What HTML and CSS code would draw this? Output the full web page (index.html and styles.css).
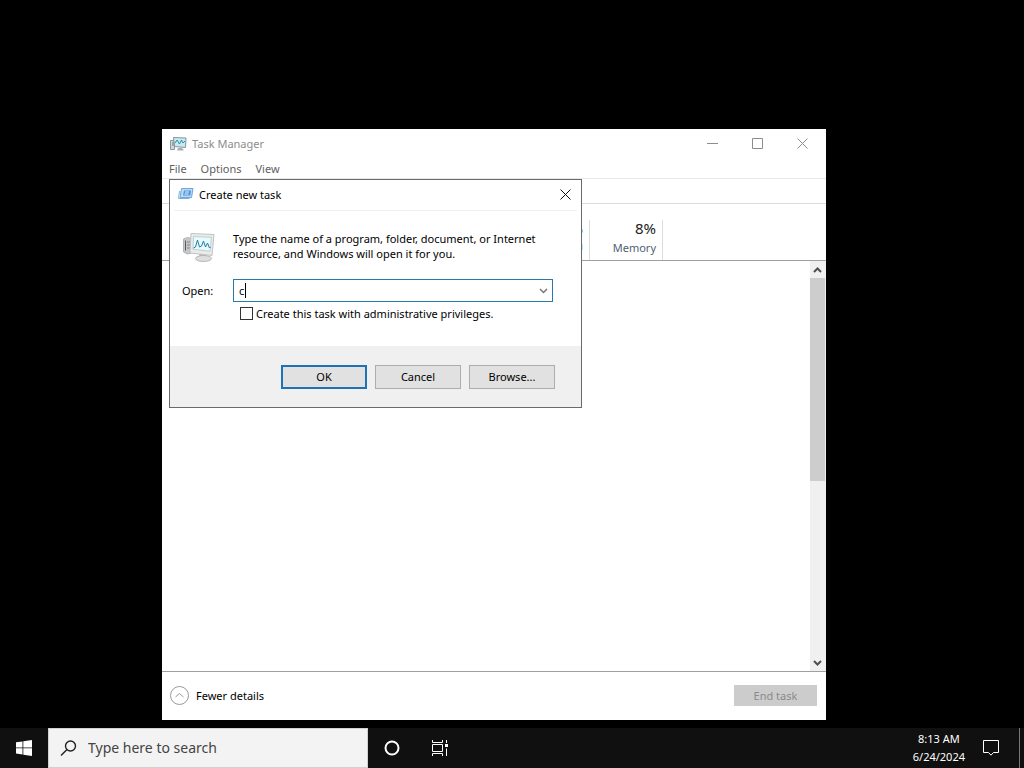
FILE: index.html
```html
<!DOCTYPE html>
<html lang="en">
<head>
    <meta charset="UTF-8">
    <meta name="viewport" content="width=device-width, initial-scale=1.0">
    <title>Task Manager</title>
    <link rel="stylesheet" href="styles.css">
</head>
<body>
    <main class="desktop">
        <section class="window">
            <header class="title-bar">
                <svg class="app-icon" width="17" height="16" viewBox="0 0 17 16">
                    <path d="M.5 4.500h4v9h-4z" fill="#d3d6d8" stroke="#8f979b"/>
                    <path d="M2 7h2M2 9h2" stroke="#6b7377"/>
                    <path d="M3.500 1.500l12.500.500-.5 9.500-11-1z" fill="#c8ebf1" stroke="#8a9498"/>
                    <path d="M5 7l2-3 2.500 4 2-4 1.500 3 2-2" fill="none" stroke="#2f8fa5"/>
                    <path d="M8 12h4l2 2.500H7z" fill="#a9afb1"/>
                </svg>
                <h1>Task Manager</h1>
                <div class="window-controls">
                    <button type="button" aria-label="Minimize"><svg width="11" height="11" viewBox="0 0 11 11"><path d="M0 5.500h11"/></svg></button>
                    <button type="button" aria-label="Maximize"><svg width="11" height="11" viewBox="0 0 11 11"><path d="M.5.500h10v10H.5z"/></svg></button>
                    <button type="button" aria-label="Close"><svg width="11" height="11" viewBox="0 0 11 11"><path d="M.5.500l10 10M10.500.500l-10 10"/></svg></button>
                </div>
            </header>
            <nav class="menu">
                <a href="#">File</a>
                <a href="#">Options</a>
                <a href="#">View</a>
            </nav>
            <div class="tabs"></div>
            <table class="processes">
                <thead>
                    <tr>
                        <td class="name"></td>
                        <th><span>%</span>CPU</th>
                        <th><span>8%</span>Memory</th>
                        <td></td>
                    </tr>
                </thead>
            </table>
            <div class="list">
                <div class="scrollbar">
                    <svg width="9" height="16" viewBox="0 0 9 16"><path d="M1 10l3.500-3.500L8 10"/></svg>
                    <div class="thumb"></div>
                    <svg class="down" width="9" height="16" viewBox="0 0 9 16"><path d="M1 6l3.500 3.500L8 6"/></svg>
                </div>
            </div>
            <footer class="window-footer">
                <button type="button" class="fewer">
                    <svg width="19" height="19" viewBox="0 0 19 19"><circle cx="9.500" cy="9.500" r="9"/><path d="M5.500 11l4-3.500 4 3.500"/></svg>
                    Fewer details
                </button>
                <button type="button" class="end-task" disabled>End task</button>
            </footer>
        </section>

        <form class="dialog">
            <header class="dialog-title">
                <svg width="16" height="14" viewBox="0 0 16 14">
                    <path d="M3.500 1.500h11.500l-1.500 9H2z" fill="#bcdcf5" stroke="#6aa5dc"/>
                    <path d="M1.500 4l-1 7.500h11" fill="none" stroke="#79b2e4"/>
                    <path d="M6 3.500h7l-.7 5H5z" fill="#4f94d6"/>
                    <path d="M7 5h4M6.500 7h4" stroke="#e8f5ff"/>
                </svg>
                <h2>Create new task</h2>
                <button type="button" class="close" aria-label="Close"><svg width="11" height="11" viewBox="0 0 11 11"><path d="M.5.500l10 10M10.500.500l-10 10"/></svg></button>
            </header>
            <div class="dialog-body">
                <div class="intro">
                    <svg width="34" height="32" viewBox="0 0 34 32">
                        <path d="M1.500 8l4-1.500 4 1v14.500l-4 1-4-2z" fill="#c5c7c8" stroke="#b0b2b3"/>
                        <path d="M3.500 9.500v10" stroke="#55595b"/>
                        <path d="M5 11h3M5 14h3M5 17h3" stroke="#85898b"/>
                        <path d="M17 22l7 1 1 4h-7z" fill="#b5b5b5"/>
                        <ellipse cx="21.500" cy="27.500" rx="8" ry="3" fill="#dedede" stroke="#b5b5b5"/>
                        <path d="M9 2.500l23 1-2 21-22-2.500z" fill="#ebebeb" stroke="#c2c2c2"/>
                        <path d="M11.500 5.500l18 .8-1.500 14-17-2z" fill="#e8fafd" stroke="#bcd0d4"/>
                        <path d="M11.500 17l2-1 2-7 2 7 2-1 2-5 2 6 2-4 2 5 1-1" fill="none" stroke="#267f9e"/>
                    </svg>
                    <p>Type the name of a program, folder, document, or Internet resource, and Windows will open it for you.</p>
                </div>
                <div class="open-row">
                    <label for="open">Open:</label>
                    <div class="combo">
                        <input type="text" id="open" value="c">
                        <span class="caret"></span>
                        <button type="button" aria-label="Show list"><svg width="9" height="6" viewBox="0 0 9 6"><path d="M1 1l3.500 3.500L8 1"/></svg></button>
                    </div>
                </div>
                <div class="admin-row">
                    <input type="checkbox" id="admin">
                    <label for="admin">Create this task with administrative privileges.</label>
                </div>
            </div>
            <div class="dialog-buttons">
                <button type="button" class="default">OK</button>
                <button type="button">Cancel</button>
                <button type="button">Browse...</button>
            </div>
        </form>
    </main>

    <footer class="taskbar">
        <button type="button" class="start" aria-label="Start">
            <svg width="16" height="16" viewBox="0 0 16 16"><path d="M0 2.300l6.500-.9v6.100H0zM7.300 1.300L16 0v7.500H7.300zM0 8.300h6.500v6.200L0 13.600zM7.300 8.300H16V16l-8.700-1.300z"/></svg>
        </button>
        <label class="search">
            <svg width="17" height="17" viewBox="0 0 17 17"><circle cx="10.500" cy="6" r="5"/><path d="M7 9.500L1 15.500"/></svg>
            <input type="text" placeholder="Type here to search" aria-label="Search">
        </label>
        <button type="button" class="tool" aria-label="Cortana">
            <svg width="16" height="16" viewBox="0 0 16 16"><circle cx="8" cy="8" r="6.500" stroke-width="2"/></svg>
        </button>
        <button type="button" class="tool" aria-label="Task View">
            <svg width="17" height="16" viewBox="0 0 17 16"><path d="M.5 0v2.500h10V0M.5 4.500h10v7H.5zM.5 16v-2.500h10V16M14.500 0v3M14.500 8.500V16"/><path d="M13 4h3v3h-3z" fill="#fff" stroke="none"/></svg>
        </button>
        <time class="clock"><span>8:13 AM</span><span>6/24/2024</span></time>
        <button type="button" class="notifications" aria-label="Notifications">
            <svg width="16" height="16" viewBox="0 0 16 16"><path d="M.5.500h15v12H10.500L8 15.200 5.500 12.500h-5z"/></svg>
        </button>
        <button type="button" class="show-desktop" aria-label="Show desktop"></button>
    </footer>
</body>
</html>
```
FILE: styles.css
```css
* {
    box-sizing: border-box;
}

body {
    margin: 0;
    min-height: 100vh;
    display: flex;
    flex-direction: column;
    background-color: #000;
    font-family: "Noto Sans", "Open Sans", sans-serif;
    font-size: 11px;
    line-height: 15px;
    color: #000;
}

button,
input {
    font: inherit;
    color: inherit;
    margin: 0;
    padding: 0;
    border: none;
    background: none;
}

button {
    display: flex;
    align-items: center;
    justify-content: center;
}

h1, h2, p {
    margin: 0;
    font-size: inherit;
    font-weight: normal;
}

svg {
    display: block;
    flex-shrink: 0;
}

.desktop {
    flex: 1;
    position: relative;
}

/* Task Manager window */
.window {
    position: absolute;
    left: 162px;
    top: 129px;
    width: 664px;
    height: 591px;
    display: flex;
    flex-direction: column;
    background-color: #fff;
}

.title-bar {
    display: flex;
    align-items: center;
    height: 29px;
    padding: 0 1px 0 8px;
    gap: 5px;
    color: #8c8c8c;
}

.window-controls {
    display: flex;
    align-self: stretch;
    margin-left: auto;
}

.window-controls button {
    width: 45px;
    height: 29px;
}

.window-controls path {
    fill: none;
    stroke: #8c8c8c;
}

.menu {
    display: flex;
    align-items: center;
    gap: 14px;
    height: 21px;
    padding: 1px 0 0 7px;
    border-bottom: 1px solid #e8e8e8;
}

.menu a {
    color: #606060;
    text-decoration: none;
}

.tabs {
    height: 25px;
    border-bottom: 1px solid #dcdcdc;
}

.processes {
    width: 100%;
    height: 57px;
    table-layout: fixed;
    border-collapse: collapse;
    border-bottom: 1px solid #a0a0a0;
}

.processes td,
.processes th {
    padding: 0;
}

.processes .name {
    width: 355px;
}

.processes th {
    width: 73px;
    padding: 7px 7px 0 0;
    font-weight: normal;
    text-align: right;
    color: #52616f;
    background: linear-gradient(#dcdcdc, #dcdcdc) right bottom / 1px 40px no-repeat;
}

.processes span {
    display: block;
    font-size: 15px;
    line-height: 24px;
    color: #222;
}

.list {
    flex: 1;
    display: flex;
    justify-content: flex-end;
    border-bottom: 1px solid #a0a0a0;
}

.scrollbar {
    width: 16px;
    display: flex;
    flex-direction: column;
    align-items: center;
    padding: 1px 1px 0 0;
    background-color: #f0f0f0;
}

.scrollbar path {
    fill: none;
    stroke: #505050;
    stroke-width: 2;
}

.scrollbar .thumb {
    width: 15px;
    height: 203px;
    background-color: #cdcdcd;
}

.scrollbar .down {
    margin-top: auto;
}

.window-footer {
    display: flex;
    align-items: center;
    justify-content: space-between;
    height: 48px;
    padding: 0 9px 2px 8px;
}

.fewer {
    gap: 7px;
}

.fewer svg {
    fill: none;
    stroke: #999;
}

.end-task {
    width: 83px;
    height: 21px;
    background-color: #ccc;
    color: #8a8a8a;
}

/* Create new task dialog */
.dialog {
    position: absolute;
    left: 169px;
    top: 179px;
    width: 413px;
    height: 229px;
    display: flex;
    flex-direction: column;
    background-color: #fff;
    border: 1px solid #6a6a6a;
}

.dialog-title {
    display: flex;
    align-items: center;
    gap: 5px;
    height: 31px;
    margin: 0 4px;
    padding: 0 0 2px 4px;
    border-bottom: 1px solid #f0f0f0;
}

.close {
    width: 23px;
    height: 28px;
    margin-left: auto;
}

.close path {
    stroke: #111;
    stroke-width: 1;
}

.dialog-body {
    flex: 1;
    padding: 20px 28px 0 12px;
}

.intro {
    display: flex;
    gap: 17px;
}

.open-row {
    display: flex;
    align-items: center;
    margin-top: 16px;
}

.open-row label {
    width: 51px;
}

.combo {
    position: relative;
    flex: 1;
    display: flex;
    height: 23px;
    border: 1px solid #267ab0;
}

.combo input {
    flex: 1;
    padding-left: 5px;
    outline: none;
}

.combo .caret {
    position: absolute;
    left: 11px;
    top: 3px;
    width: 1px;
    height: 15px;
    background-color: #000;
}

.combo button {
    width: 17px;
}

.combo path {
    fill: none;
    stroke: #777;
    stroke-width: 1.5;
}

.admin-row {
    display: flex;
    align-items: center;
    gap: 3px;
    margin: 4px 0 0 58px;
}

.admin-row input {
    appearance: none;
    width: 13px;
    height: 13px;
    border: 1px solid #333;
    background-color: #fff;
}

.dialog-buttons {
    display: flex;
    justify-content: flex-end;
    align-items: flex-start;
    gap: 8px;
    height: 61px;
    padding: 19px 26px 0 0;
    background-color: #f0f0f0;
}

.dialog-buttons button {
    width: 86px;
    height: 24px;
    padding-bottom: 1px;
    border: 1px solid #adadad;
    background-color: #e1e1e1;
}

.dialog-buttons .default {
    border: 2px solid #1c72b4;
}

/* Taskbar */
.taskbar {
    display: flex;
    height: 40px;
    background-color: #101010;
    color: #fff;
}

.taskbar svg {
    fill: none;
    stroke: #fff;
}

.start,
.tool {
    width: 48px;
}

.taskbar .start svg {
    fill: #fff;
    stroke: none;
}

.search {
    display: flex;
    align-items: center;
    gap: 11px;
    width: 320px;
    padding-left: 11px;
    background-color: #f3f3f3;
    border: 1px solid #d0d0d0;
}

.taskbar .search svg {
    stroke: #222;
    stroke-width: 1.4;
}

.search input {
    flex: 1;
    font-size: 14px;
    line-height: 22px;
}

.search input::placeholder {
    color: #444;
    opacity: 1;
}

.clock {
    display: flex;
    flex-direction: column;
    justify-content: center;
    margin-left: auto;
    padding-bottom: 1px;
    line-height: 18px;
    text-align: center;
}

.notifications {
    width: 51px;
}

.show-desktop {
    width: 5px;
    margin-left: 3px;
    border-left: 1px solid #777;
}
```
